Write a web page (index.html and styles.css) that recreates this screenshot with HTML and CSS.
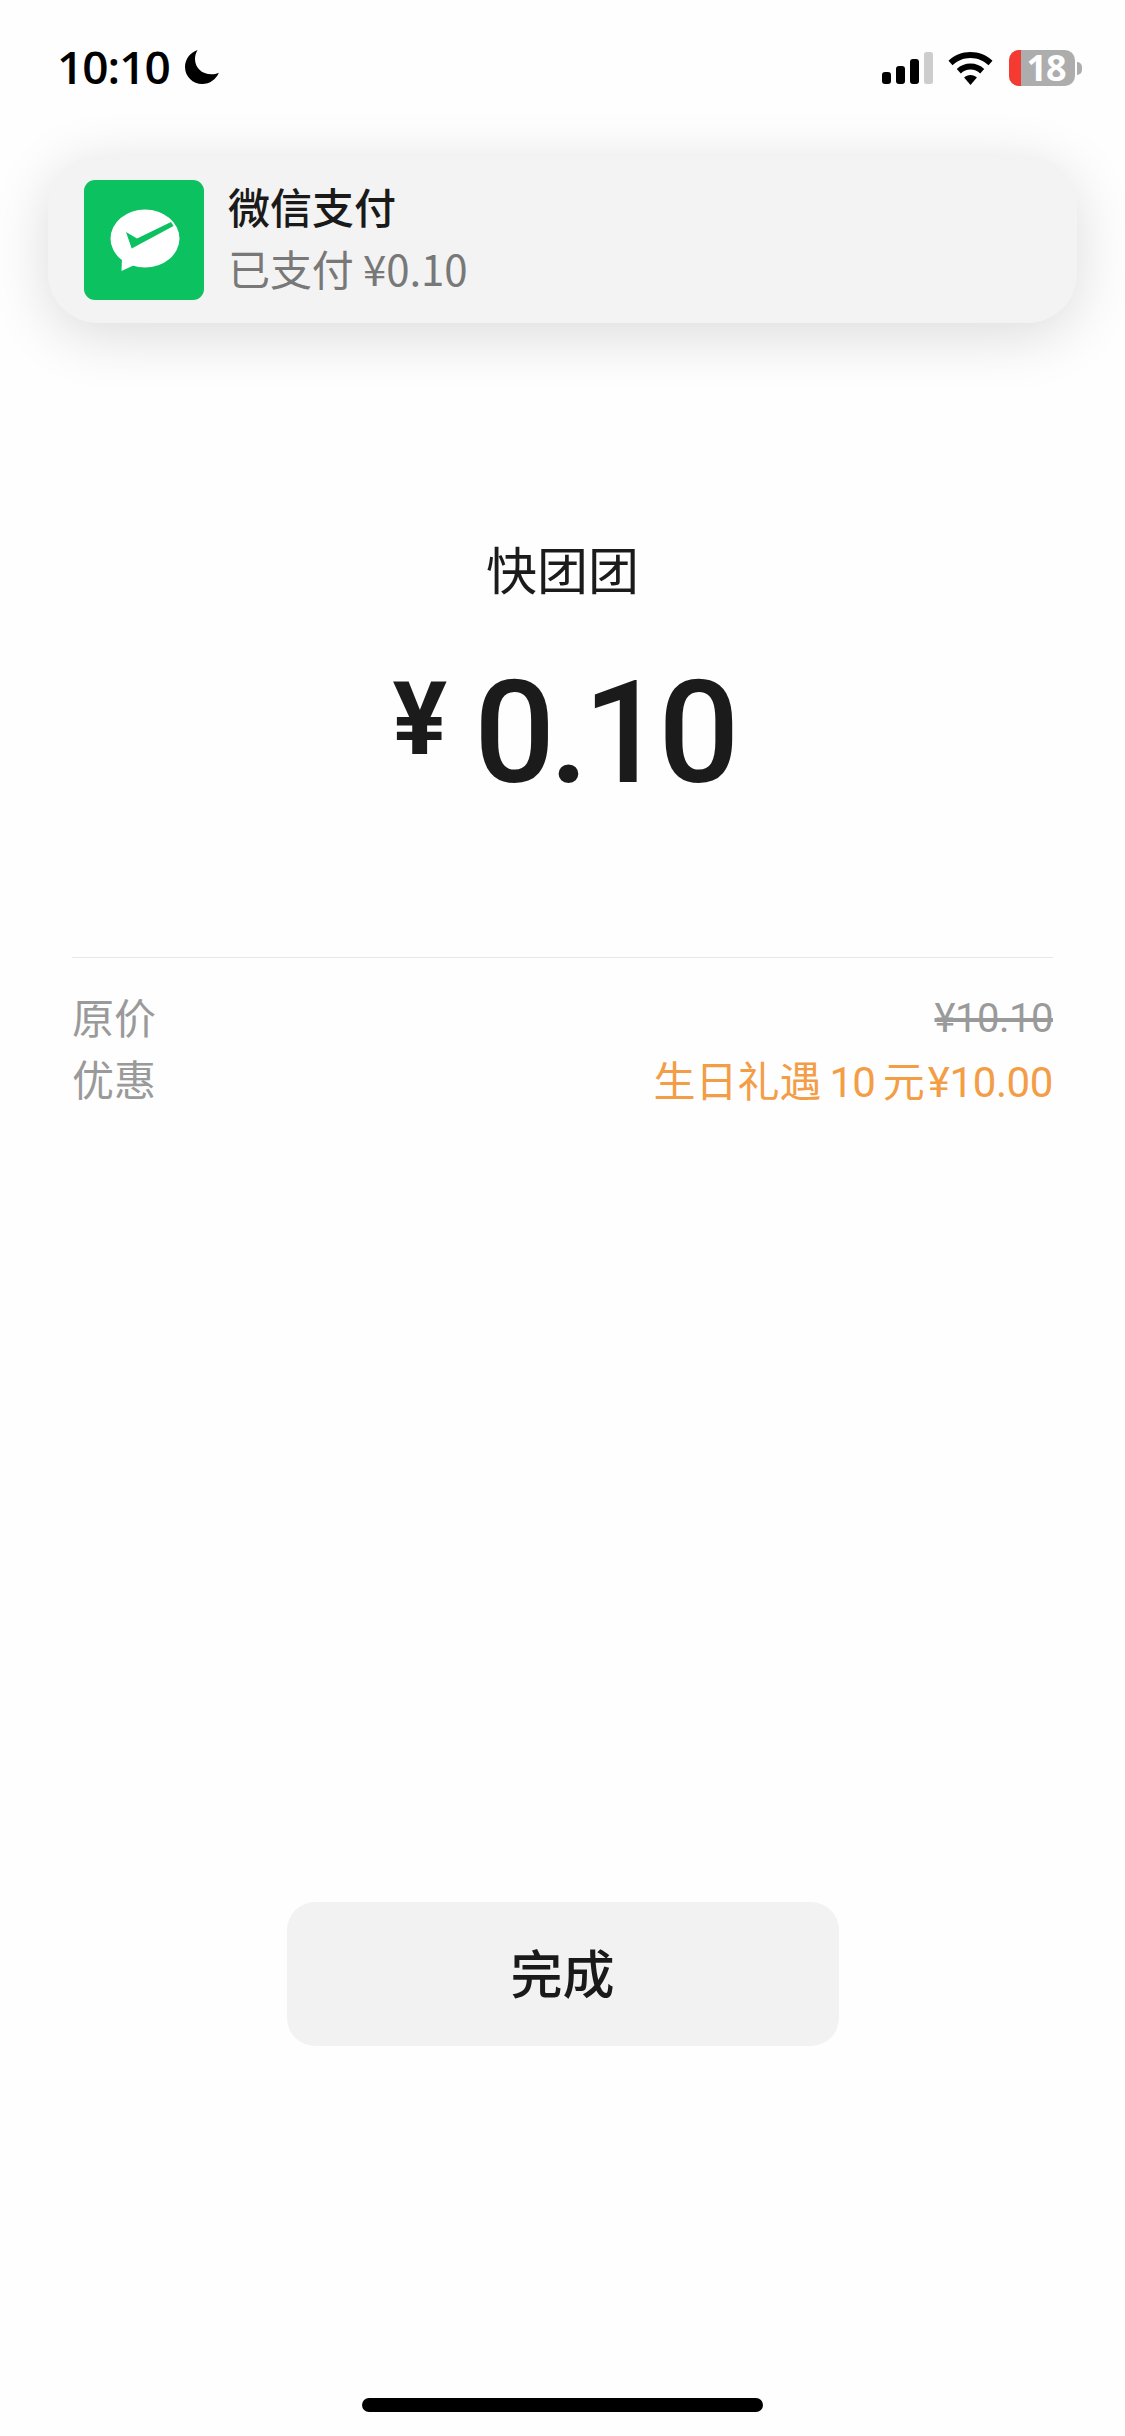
FILE: index.html
```html
<!DOCTYPE html>
<html lang="zh-CN">
<head>
<meta charset="utf-8">
<title>支付成功</title>
<link rel="stylesheet" href="styles.css">
</head>
<body>
<div class="page">
  <header class="status">
    <div class="status-left">
      <span class="time">10:10</span>
      <svg class="moon" viewBox="0 0 34 34"><path d="M12.5 0C5 2.5 0 9.300 0 17c0 9.600 7.800 17 17.300 17 7.500 0 13.800-4.500 16.500-11.200-2.500 1-4.800 1.500-7.300 1.500C16.500 24.300 10 17.500 10 9c0-3.200.9-6.200 2.500-9z"/></svg>
    </div>
    <div class="status-right">
      <svg class="signal" viewBox="0 0 51 32"><rect x="0" y="20" width="9" height="12" rx="3"/><rect x="14" y="14" width="9" height="18" rx="3"/><rect x="28" y="7" width="9" height="25" rx="3"/><rect class="signal-off" x="42" y="0" width="9" height="32" rx="2.500"/></svg>
      <svg class="wifi" viewBox="0 0 45 33"><path d="M22.500 0C14 0 6.300 3.300.5 8.800l4 4.500C9.200 8.800 15.500 6 22.500 6s13.300 2.800 18 7.300l4-4.500C38.700 3.300 31 0 22.500 0z"/><path d="M22.500 11.500c-5.300 0-10 2-13.700 5.400l4 4.500c2.600-2.400 6-3.900 9.700-3.900s7.100 1.500 9.700 3.900l4-4.500c-3.700-3.400-8.400-5.400-13.700-5.400z"/><path d="M22.500 23c-2.500 0-4.800 1-6.400 2.500l6.400 7.500 6.400-7.500C27.300 24 25 23 22.500 23z"/></svg>
      <div class="battery">
        <div class="battery-body"><span class="battery-low"></span><span class="battery-num">18</span></div>
        <span class="battery-nub"></span>
      </div>
    </div>
  </header>

  <section class="notice">
    <svg class="notice-icon" viewBox="0 0 120 120">
      <rect width="120" height="120" rx="11" fill="#0bc160"/>
      <ellipse cx="61" cy="58.500" rx="34.500" ry="29" fill="#fff"/>
      <path d="M38 78l-.5 13 15-7z" fill="#fff"/>
      <path d="M42 52l11 6.500L87 42l2.500 4L47.700 68.500z" fill="#0bc160"/>
    </svg>
    <div class="notice-text">
      <div class="notice-title">微信支付</div>
      <div class="notice-sub">已支付 ¥0.10</div>
    </div>
  </section>

  <main class="main">
    <div class="merchant">快团团</div>
    <div class="amount"><span class="amount-cur">¥</span><span class="amount-num">0.10</span></div>
    <div class="details">
      <div class="row">
        <span class="row-label">原价</span>
        <span class="row-value row-strike">¥10.10</span>
      </div>
      <div class="row">
        <span class="row-label">优惠</span>
        <span class="row-value row-orange">生日礼遇<span class="row-num">10</span>元<span class="row-disc">¥10.00</span></span>
      </div>
    </div>
  </main>

  <div class="action"><button class="done" type="button">完成</button></div>
  <div class="home-area"><span class="home-bar"></span></div>
</div>
</body>
</html>
```

FILE: styles.css
```css
* { box-sizing: border-box; }
html, body { margin: 0; padding: 0; background: #fefefe; }
body { font-family: Roboto, "Noto Sans CJK SC", sans-serif; color: #1b1b1b; }
.page { width: 1125px; height: 2436px; display: flex; flex-direction: column; overflow: hidden; }

.status { height: 156px; padding: 42px 43px 0 57px; display: flex; justify-content: space-between; align-items: flex-start; }
.status-left { display: flex; align-items: center; gap: 15px; height: 48px; }
.time { font-family: "Open Sans", Roboto, sans-serif; font-size: 46px; font-weight: 600; line-height: 48px; color: #000; letter-spacing: -1px; }
.moon { width: 34px; height: 34px; fill: #000; margin-top: 2px; }
.status-right { display: flex; align-items: center; height: 52px; }
.signal { width: 51px; height: 32px; fill: #000; margin-right: 15px; }
.signal-off { fill: #cdcdcd; }
.wifi { width: 45px; height: 33px; fill: #000; margin-right: 16px; }
.battery { display: flex; align-items: center; gap: 2px; }
.battery-body { position: relative; width: 66px; height: 36px; border-radius: 10px; background: #adadad; display: flex; align-items: center; justify-content: center; }
.battery-low { position: absolute; left: 0; top: 0; bottom: 0; width: 12px; border-radius: 10px 0 0 10px; background: #f53a32; }
.battery-num { position: relative; font-family: "Open Sans", sans-serif; font-size: 36px; font-weight: 700; color: #fff; line-height: 36px; margin-left: 8px; letter-spacing: -1px; }
.battery-nub { width: 5px; height: 13px; border-radius: 0 7px 7px 0; background: #adadad; }

.notice { margin: 0 48px; height: 167px; border-radius: 50px; background: #f3f3f3; box-shadow: 0 12px 60px rgba(0, 0, 0, .14); padding: 24px 36px; display: flex; gap: 24px; align-items: flex-start; }
.notice-icon { width: 120px; height: 120px; flex: none; }
.notice-text { display: flex; flex-direction: column; }
.notice-title { font-family: "Noto Sans CJK SC", sans-serif; font-size: 42px; font-weight: 500; line-height: 60px; color: #1a1a1a; margin-top: -4px; }
.notice-sub { font-size: 42px; line-height: 64px; color: #787878; font-family: "Noto Sans CJK SC", sans-serif; font-weight: 400; letter-spacing: -.1px; }

.main { padding: 0 72px; display: flex; flex-direction: column; }
.merchant { margin-top: 210px; text-align: center; font-family: "Noto Sans CJK SC", sans-serif; font-size: 51px; line-height: 70px; font-weight: 400; }
.amount { margin-top: 50px; height: 160px; display: flex; justify-content: center; align-items: flex-start; font-weight: 500; }
.amount-cur { font-size: 102px; line-height: 132px; font-weight: 700; margin-right: 27px; }
.amount-num { font-size: 143px; line-height: 160px; letter-spacing: -6px; margin-right: -1px; }
.details { margin-top: 144px; border-top: 1px solid #e8e8e8; padding-top: 27px; }
.row { height: 62px; display: flex; justify-content: space-between; align-items: center; font-size: 42px; font-family: "Noto Sans CJK SC", sans-serif; }
.row-label { color: #9a9a9a; font-weight: 400; margin-top: -2px; }
.row-value { font-family: Roboto, "Noto Sans CJK SC", sans-serif; }
.row-strike { color: #9a9a9a; text-decoration: line-through; font-size: 40px; letter-spacing: -.5px; margin-top: 4px; }
.row-orange { color: #f39d47; font-weight: 400; }
.row-num { margin: 0 8px; letter-spacing: -1px; }
.row-disc { margin-left: 3px; letter-spacing: -.4px; }

.action { margin-top: auto; display: flex; justify-content: center; }
.done { width: 552px; height: 144px; border: 0; border-radius: 28px; background: #f2f2f2; color: #1a1a1a; font-family: "Noto Sans CJK SC", sans-serif; font-size: 52px; font-weight: 500; padding: 0 0 6px; }
.home-area { height: 390px; flex: none; display: flex; justify-content: center; align-items: flex-start; padding-top: 352px; }
.home-bar { width: 401px; height: 14px; border-radius: 7px; background: #000; }
```
